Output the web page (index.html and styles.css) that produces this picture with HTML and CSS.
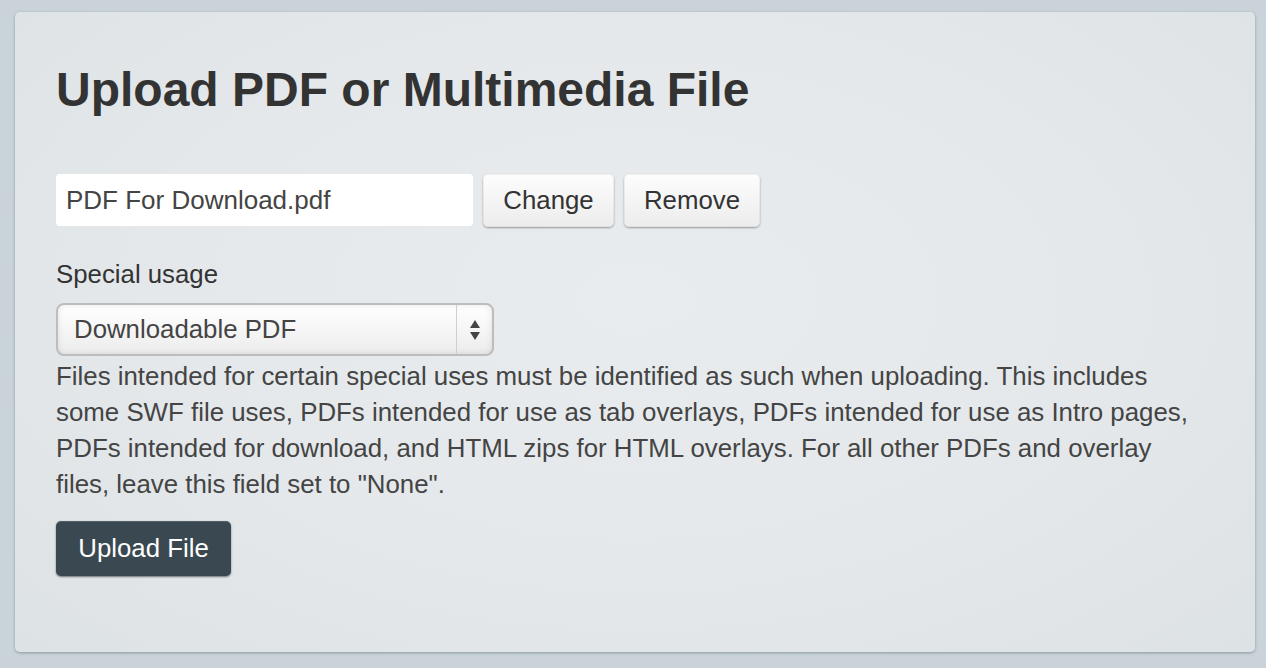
FILE: index.html
```html
<!DOCTYPE html>
<html>
<head>
<meta charset="utf-8">
<link rel="stylesheet" href="styles.css">
</head>
<body>
<div class="panel">
  <h1 class="title">Upload PDF or Multimedia File</h1>
  <div class="file-row">
    <div class="file-input">PDF For Download.pdf</div>
    <button class="btn btn-change">Change</button>
    <button class="btn btn-remove">Remove</button>
  </div>
  <div class="label">Special usage</div>
  <div class="select">
    <span class="select-text">Downloadable PDF</span>
    <span class="select-arrows">
      <svg width="12" height="22" viewBox="0 0 12 22"><path d="M6 1 L11 9 H1 Z" fill="#444"/><path d="M6 21 L11 13 H1 Z" fill="#444"/></svg>
    </span>
  </div>
  <p class="help">Files intended for certain special uses must be identified as such when uploading. This includes some SWF file uses, PDFs intended for use as tab overlays, PDFs intended for use as Intro pages, PDFs intended for download, and HTML zips for HTML overlays. For all other PDFs and overlay files, leave this field set to "None".</p>
  <button class="btn-primary">Upload File</button>
</div>
</body>
</html>
```

FILE: styles.css
```css
html, body {
  margin: 0;
  padding: 0;
}
body {
  background: #c9d3d9;
  font-family: "Liberation Sans", Arial, sans-serif;
  color: #333;
  padding: 12px 11px 16px 15px;
  height: 668px;
  box-sizing: border-box;
}
.panel {
  height: 640px;
  box-sizing: border-box;
  border-radius: 5px;
  background: radial-gradient(ellipse at 50% 45%, #e8ecee 0%, #e4e8ea 55%, #dde2e5 100%);
  box-shadow: 0 1px 3px rgba(60, 80, 95, 0.45);
  padding: 58px 40px 0 41px;
}
.title {
  margin: 0;
  font-size: 48px;
  font-weight: bold;
  line-height: 40px;
  color: #333;
}
.file-row {
  display: flex;
  gap: 10px;
  margin-top: 64px;
  align-items: flex-start;
}
.file-input {
  width: 417px;
  height: 52px;
  box-sizing: border-box;
  background: #fff;
  border-radius: 4px;
  font-size: 26px;
  line-height: 52px;
  padding-left: 10px;
  color: #444;
}
.btn {
  height: 53px;
  box-sizing: border-box;
  border: none;
  border-radius: 5px;
  background: linear-gradient(#fdfdfd, #ececec);
  box-shadow: 0 1px 2px rgba(0,0,0,0.35), inset 0 0 0 1px rgba(0,0,0,0.05);
  font-family: "Liberation Sans", Arial, sans-serif;
  font-size: 25.8px;
  color: #333;
  padding: 0;
}
.btn-change { width: 131px; }
.btn-remove { width: 136px; }
.label {
  margin-top: 34px;
  font-size: 25.8px;
  line-height: 26px;
  color: #333;
}
.select {
  margin-top: 16px;
  width: 438px;
  height: 53px;
  box-sizing: border-box;
  border: 2px solid #bdbdbd;
  border-radius: 8px;
  background: linear-gradient(#ffffff 0%, #f6f6f6 50%, #ececec 100%);
  box-shadow: inset 0 0 6px rgba(0,0,0,0.1);
  display: flex;
  align-items: stretch;
}
.select-text {
  flex: 1;
  font-size: 25.8px;
  line-height: 49px;
  padding-left: 16px;
  color: #444;
}
.select-arrows {
  width: 35px;
  border-left: 1px solid #cfcfcf;
  display: flex;
  align-items: center;
  justify-content: center;
}
.help {
  margin: 2px 0 0 0;
  max-width: 1150px;
  font-size: 25.85px;
  line-height: 36px;
  color: #444;
}
.btn-primary {
  margin-top: 19px;
  width: 175px;
  height: 55px;
  border: none;
  border-radius: 5px;
  background: #3a4951;
  box-shadow: 0 1px 2px rgba(0,0,0,0.5), inset 0 1px 0 rgba(255,255,255,0.12);
  color: #fff;
  font-family: "Liberation Sans", Arial, sans-serif;
  font-size: 25.8px;
}
```
